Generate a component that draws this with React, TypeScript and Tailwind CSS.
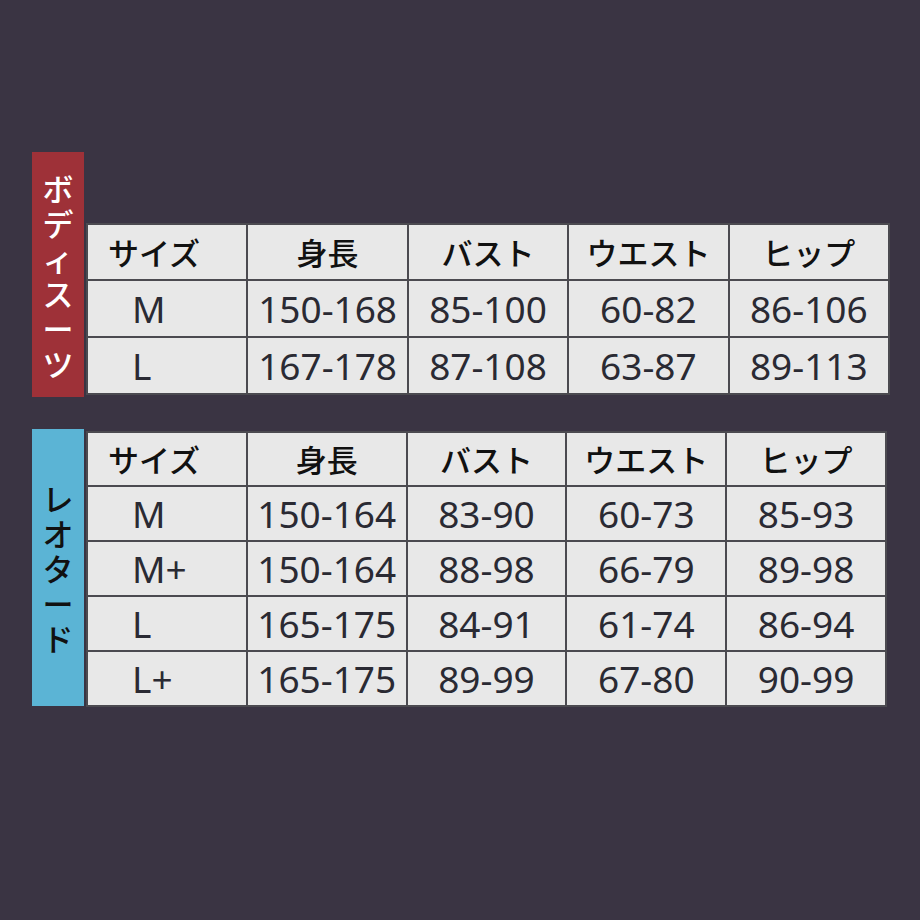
import React from 'react';

const jp = "font-['Noto_Sans_CJK_JP',sans-serif]";
const num = "font-['Noto_Sans','Noto_Sans_CJK_JP',sans-serif]";

const headers = ['サイズ', '身長', 'バスト', 'ウエスト', 'ヒップ'];

const bodysuit = [
  ['M', '150-168', '85-100', '60-82', '86-106'],
  ['L', '167-178', '87-108', '63-87', '89-113'],
];

const leotard = [
  ['M', '150-164', '83-90', '60-73', '85-93'],
  ['M+', '150-164', '88-98', '66-79', '89-98'],
  ['L', '165-175', '84-91', '61-74', '86-94'],
  ['L+', '165-175', '89-99', '67-80', '90-99'],
];

function Label({ text, className }: { text: string; className: string }) {
  return (
    <div className={`w-[52px] flex flex-col items-center justify-center ${jp} text-[31px] font-medium leading-[35px] ${className}`}>
      {text.split('').map((c, i) => (
        <span key={i}>{c}</span>
      ))}
    </div>
  );
}

function SizeTable({ rows, rowH, headH, width }: { rows: string[][]; rowH: string; headH: string; width: string }) {
  return (
    <div className={`${width} grid grid-cols-5 gap-[2px] bg-[#4b4a50] border-2 border-[#4b4a50]`}>
      {headers.map((h, i) => (
        <div
          key={h}
          className={`${headH} bg-[#e8e8e8] flex items-center ${i === 0 ? 'pl-[20px]' : 'justify-center'} ${jp} text-[31px] font-medium text-[#111]`}
        >
          {h}
        </div>
      ))}
      {rows.map((r) =>
        r.map((v, i) => (
          <div
            key={r[0] + i}
            className={`${rowH} bg-[#e8e8e8] flex items-center ${i === 0 ? 'pl-[44px]' : 'justify-center'} ${num} text-[37px] font-normal text-[#2a2a33]`}
          >
            {v}
          </div>
        ))
      )}
    </div>
  );
}

export default function App() {
  return (
    <div className="w-[920px] h-[920px] bg-[#3a3443] pt-[152px] pl-[32px]">
      <div className="flex items-end gap-[2px]">
        <Label text="ボディスーツ" className="h-[245px] bg-[#9e3138] text-white" />
        <div className="mb-[2px]">
          <SizeTable rows={bodysuit} headH="h-[54px]" rowH="h-[55px]" width="w-[804px]" />
        </div>
      </div>
      <div className="flex items-start gap-[2px] mt-[32px]">
        <Label text="レオタード" className="h-[277px] bg-[#5bb4d5] text-[#111]" />
        <div className="mt-[2px]">
          <SizeTable rows={leotard} headH="h-[52px]" rowH="h-[53px]" width="w-[801px]" />
        </div>
      </div>
    </div>
  );
}
